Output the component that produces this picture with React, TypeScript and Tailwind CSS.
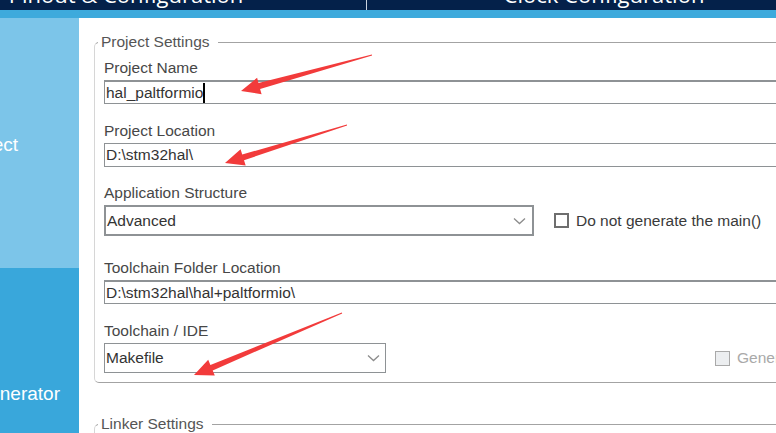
import React from "react";

type Pt = [number, number];

// red annotation arrow: tapered shaft + head, computed from tail and tip
const Arrow = ({ tail, tip }: { tail: Pt; tip: Pt }) => {
  const dx = tip[0] - tail[0];
  const dy = tip[1] - tail[1];
  const len = Math.hypot(dx, dy);
  const ux = dx / len;
  const uy = dy / len;
  const nx = -uy;
  const ny = ux;
  const headLen = 19;
  const headW = 8.5;
  const shaftW = 3;
  const bx = tip[0] - ux * headLen;
  const by = tip[1] - uy * headLen;
  const p = (x: number, y: number) => `${x.toFixed(1)},${y.toFixed(1)}`;
  const pts = [
    p(tail[0] + nx * 0.4, tail[1] + ny * 0.4),
    p(bx + nx * shaftW, by + ny * shaftW),
    p(bx + nx * headW, by + ny * headW),
    p(tip[0], tip[1]),
    p(bx - nx * headW, by - ny * headW),
    p(bx - nx * shaftW, by - ny * shaftW),
    p(tail[0] - nx * 0.4, tail[1] - ny * 0.4),
  ].join(" ");
  return <polygon points={pts} fill="#f23b3b" />;
};

const Chevron = () => (
  <svg width="13" height="8" viewBox="0 0 13 8" className="shrink-0">
    <path d="M1 1.5 L6.5 6.5 L12 1.5" fill="none" stroke="#8c8c8c" strokeWidth="1.3" />
  </svg>
);

const Label = ({ children }: { children: React.ReactNode }) => (
  <div className="h-[18px] leading-[18px] text-[15.5px] text-[#474747] mb-[3px] whitespace-nowrap">
    {children}
  </div>
);

export default function App() {
  return (
    <div className="relative w-[776px] h-[433px] overflow-hidden bg-white font-['Liberation_Sans',Arial,sans-serif]">
      {/* top tabs (cut off) */}
      <div className="h-[10px] bg-[#04214a] flex overflow-hidden text-white font-['Open_Sans',sans-serif]">
        <div className="w-[480px] -ml-[114px] shrink-0 flex justify-center">
          <span className="text-[22px] leading-[22px] -mt-[17px] whitespace-nowrap">Pinout &amp; Configuration</span>
        </div>
        <div className="w-px shrink-0 bg-[#c9d3df]" />
        <div className="w-[474px] shrink-0 flex justify-center">
          <span className="text-[22px] leading-[22px] -mt-[17px] whitespace-nowrap">Clock Configuration</span>
        </div>
      </div>
      <div className="h-[8px] bg-[#3eaadc]" />

      <div className="flex h-[415px]">
        {/* left tabs */}
        <aside className="w-[79px] shrink-0 flex flex-col text-white text-[19px] leading-[22px]">
          <div className="h-[250px] bg-[#7cc5e9] flex items-center justify-end pr-[61px] overflow-hidden pt-[4px]">
            <span className="whitespace-nowrap">Project</span>
          </div>
          <div className="flex-1 bg-[#39a7db] flex items-start justify-end pr-[19px] pt-[115px] overflow-hidden">
            <span className="whitespace-nowrap">Code Generator</span>
          </div>
        </aside>

        <main className="flex-1 overflow-hidden pl-[15px] pt-[15px]">
          <fieldset className="w-[720px] rounded-[5px] border border-[#d6d6d6] border-t-[#a3a3a3] border-b-[#a3a3a3] pl-[9px] pt-[8px] pb-[9px]">
            <legend className="-ml-[6px] pl-[3px] pr-[8px] h-[18px] leading-[18px] text-[15.5px] text-[#555]">
              Project Settings
            </legend>

            <Label>Project Name</Label>
            <div className="h-[24px] border border-t-2 border-[#8e9295] flex items-center pl-px text-[15.5px] text-[#333]">
              <span>hal_paltformio</span>
              <span className="w-[2px] h-[20px] bg-black" />
            </div>

            <div className="mt-[18px]">
              <Label>Project Location</Label>
              <div className="h-[24px] border border-[#8e9295] flex items-center pl-px text-[15.5px] text-[#333]">
                D:\stm32hal\
              </div>
            </div>

            <div className="mt-[17px]">
              <Label>Application Structure</Label>
              <div className="flex items-center">
                <div className="w-[430px] h-[31px] border-2 border-[#8e9295] flex items-center justify-between pl-[1px] pr-[6px] text-[15.5px] text-[#333]">
                  <span>Advanced</span>
                  <Chevron />
                </div>
                <div className="ml-[20px] w-[15px] h-[15px] border-2 border-[#6e6e6e] bg-white" />
                <span className="ml-[7px] text-[15.5px] text-[#3a3a3a] whitespace-nowrap">Do not generate the main()</span>
              </div>
            </div>

            <div className="mt-[23px]">
              <Label>Toolchain Folder Location</Label>
              <div className="h-[24px] border border-t-2 border-[#8e9295] flex items-center pl-px text-[15.5px] text-[#333]">
                D:\stm32hal\hal+paltformio\
              </div>
            </div>

            <div className="mt-[18px]">
              <Label>Toolchain / IDE</Label>
              <div className="flex items-center">
                <div className="w-[282px] h-[30px] border border-[#8e9295] flex items-center justify-between pl-[1px] pr-[5px] text-[15.5px] text-[#333]">
                  <span>Makefile</span>
                  <Chevron />
                </div>
                <div className="ml-[329px] w-[15px] h-[15px] border border-[#a9a9a9] bg-[#eceef0]" />
                <span className="ml-[7px] text-[15.5px] text-[#a9a9a9] whitespace-nowrap">Generate Under Root</span>
              </div>
            </div>
          </fieldset>

          <fieldset className="mt-[32px] w-[720px] h-[60px] rounded-[5px] border border-[#d6d6d6] border-t-[#a3a3a3] pl-[9px]">
            <legend className="-ml-[6px] pl-[3px] pr-[8px] h-[18px] leading-[18px] text-[15.5px] text-[#555]">
              Linker Settings
            </legend>
          </fieldset>
        </main>
      </div>

      {/* annotation arrows */}
      <svg className="absolute inset-0 pointer-events-none" width="776" height="433" viewBox="0 0 776 433">
        <Arrow tail={[372, 55]} tip={[241, 91]} />
        <Arrow tail={[347, 125]} tip={[225, 163]} />
        <Arrow tail={[342, 313]} tip={[194, 375]} />
      </svg>
    </div>
  );
}
